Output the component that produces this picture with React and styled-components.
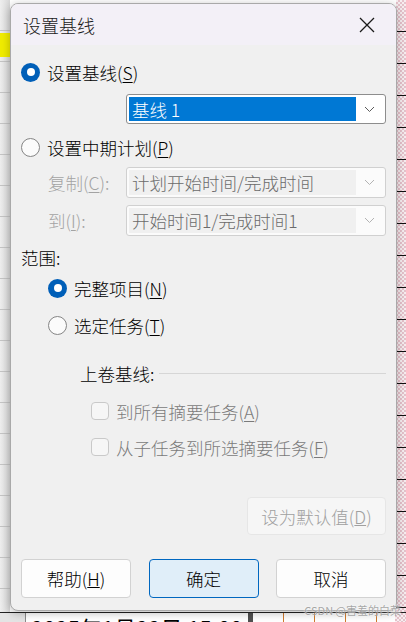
import React from 'react'
import styled, { createGlobalStyle } from 'styled-components'

const GlobalStyle = createGlobalStyle`
  html, body {
    margin: 0;
    padding: 0;
  }
  body {
    font-family: "Microsoft YaHei UI", "Noto Sans CJK SC", sans-serif;
    -webkit-font-smoothing: antialiased;
  }
`

const Desktop = styled.div`
  position: relative;
  width: 406px;
  height: 622px;
  overflow: hidden;
  display: grid;
  grid-template-columns: 10px 1fr 10px;
  grid-template-rows: 612px 10px;
  background: #fff;
`

const LeftPane = styled.div`
  display: flex;
  flex-direction: column;
  background:
    repeating-linear-gradient(to bottom, transparent 0 30px, #c4c4c4 30px 31px),
    linear-gradient(to right, #eeeeee, #d8d8d8);
`

const YellowCell = styled.div`
  margin-top: 33px;
  height: 24px;
  background: #f0ec00;
`

const RightPane = styled.div`
  background:
    repeating-linear-gradient(to bottom, transparent 0 31px, #111 31px 32px),
    repeating-conic-gradient(#e6c2cb 0 25%, #f7eef0 0 50%) 0 0 / 4px 4px;
`

const BottomStrip = styled.div`
  grid-column: 1 / -1;
  display: grid;
  grid-template-columns: 25px 1px 222px 5px 142px 1fr;
  border-top: 1px solid #222;
`

const StripGray = styled.div`
  background: #e4e4e4;
`

const StripLine = styled.div`
  background: ${p => p.$color};
`

const DateCell = styled.div`
  background: #fff;
  padding: 3px 0 0 5px;
  font-family: "Noto Sans CJK SC", sans-serif;
  font-size: 22px;
  line-height: 22px;
  color: #000;
  white-space: nowrap;
  overflow: hidden;
`

const Timeline = styled.div`
  background: repeating-linear-gradient(to right, transparent 0 30px, #d07a2c 30px 31px), #fff;
`

const Pink = styled.div`
  background: repeating-conic-gradient(#e6c2cb 0 25%, #f7eef0 0 50%) 0 0 / 4px 4px;
`

const Dialog = styled.div`
  position: absolute;
  left: 10px;
  top: 3px;
  width: 387px;
  height: 608px;
  box-sizing: border-box;
  border: 1px solid #a9a9a9;
  border-radius: 8px;
  overflow: hidden;
  display: flex;
  flex-direction: column;
  background: #f0f0f0;
  box-shadow: 0 2px 10px rgba(0, 0, 0, 0.28);
`

const TitleBar = styled.div`
  height: 41px;
  flex: none;
  display: flex;
  align-items: center;
  justify-content: space-between;
  padding: 0 14px 0 12px;
  background: #f3f0f7;
`

const Title = styled.div`
  font-size: 18px;
  font-weight: 300;
  color: #1a1a1a;
  padding-top: 1px;
`

const CloseButton = styled.div`
  width: 18px;
  height: 18px;
  display: flex;
  align-items: center;
  justify-content: center;
  margin-right: 6px;
`

const Body = styled.div`
  flex: 1;
  display: flex;
  flex-direction: column;
  padding: 0 10px 0 10px;
  font-size: 17.5px;
  font-weight: 300;
  color: #000;
`

const Row = styled.div`
  display: flex;
  align-items: center;
  height: ${p => p.$h || 22}px;
  margin-top: ${p => p.$mt || 0}px;
  margin-left: ${p => p.$ml || 0}px;
  white-space: nowrap;
`

const RadioDot = styled.span`
  flex: none;
  width: 19px;
  height: 19px;
  box-sizing: border-box;
  border-radius: 50%;
  background: ${p => (p.$checked ? '#005fb8' : '#fbfbfb')};
  border: ${p => (p.$checked ? 'none' : '1px solid #858585')};
  display: flex;
  align-items: center;
  justify-content: center;
  margin-right: 7px;

  &::after {
    content: '';
    display: ${p => (p.$checked ? 'block' : 'none')};
    width: 8px;
    height: 8px;
    border-radius: 50%;
    background: #fff;
  }
`

const Check = styled.span`
  flex: none;
  width: 18px;
  height: 18px;
  box-sizing: border-box;
  border: 1px solid #c9c9c9;
  border-radius: 4px;
  background: #f6f6f6;
  margin-right: 7px;
`

const Label = styled.span`
  color: ${p => (p.$muted ? '#a3a3a3' : p.$gray ? '#7a7a7a' : '#000')};
  u {
    text-underline-offset: 2px;
    text-decoration-thickness: 1px;
  }
`

const FieldRow = styled.div`
  display: grid;
  grid-template-columns: 105px 1fr;
  align-items: center;
  height: 31px;
  margin-top: ${p => p.$mt || 0}px;
  white-space: nowrap;
`

const FieldLabel = styled(Label)`
  padding-left: 27px;
`

const Select = styled.div`
  display: flex;
  align-items: center;
  height: ${p => p.$h || 30}px;
  box-sizing: border-box;
  border: 1px solid ${p => (p.$disabled ? '#d0d0d0' : '#8d8d8d')};
  border-radius: 3px;
  background: ${p => (p.$disabled ? '#fbfbfb' : '#fff')};
  padding: 2px;
  margin-left: ${p => p.$ml || 0}px;
  margin-top: ${p => p.$mt || 0}px;
`

const SelectValue = styled.div`
  flex: 1;
  height: 100%;
  display: flex;
  align-items: center;
  padding-left: 3px;
  background: ${p => (p.$selected ? '#0078d4' : p.$disabled ? '#f0f0f0' : 'transparent')};
  color: ${p => (p.$selected ? '#fff' : p.$disabled ? '#6b6b6b' : '#000')};
`

const ChevronBox = styled.div`
  width: 27px;
  display: flex;
  align-items: center;
  justify-content: center;
`

const SectionHead = styled.div`
  display: flex;
  align-items: center;
  height: 22px;
  margin-top: ${p => p.$mt || 0}px;
  margin-left: 59px;
`

const Rule = styled.div`
  flex: 1;
  height: 1px;
  background: #d6d6d6;
  margin-left: 5px;
`

const ButtonBase = styled.div`
  box-sizing: border-box;
  display: flex;
  align-items: center;
  justify-content: center;
  border-radius: 4px;
  white-space: nowrap;
`

const DefaultButton = styled(ButtonBase)`
  align-self: flex-end;
  width: 139px;
  height: 38px;
  margin-top: 39px;
  background: #f6f6f6;
  border: 1px solid #e6e6e6;
  color: #a0a0a0;
`

const ButtonRow = styled.div`
  display: flex;
  justify-content: space-between;
  margin-top: 24px;
`

const Button = styled(ButtonBase)`
  width: 110px;
  height: 39px;
  background: ${p => (p.$primary ? '#e0eef9' : '#fdfdfd')};
  border: 1px solid ${p => (p.$primary ? '#0067c0' : '#d2d2d2')};
  color: #000;
`

const Watermark = styled.div`
  position: absolute;
  right: 5px;
  bottom: 6px;
  font-family: "Noto Sans CJK SC", sans-serif;
  font-size: 11px;
  line-height: 12px;
  color: rgba(150, 150, 150, 0.85);
  text-shadow: 0 0 2px #fff;
`

const Chevron = ({ disabled }) => (
  <svg width="11" height="7" viewBox="0 0 11 7">
    <path d="M1 1 L5.5 5.5 L10 1" fill="none" stroke={disabled ? '#b3b3b3' : '#5c5c5c'} strokeWidth="1" />
  </svg>
)

const Radio = ({ checked, children, mt, ml }) => (
  <Row $mt={mt} $ml={ml}>
    <RadioDot $checked={checked} />
    <Label>{children}</Label>
  </Row>
)

const CheckItem = ({ children, mt }) => (
  <Row $mt={mt} $ml={70}>
    <Check />
    <Label $gray>{children}</Label>
  </Row>
)

export default function App() {
  return (
    <>
      <GlobalStyle />
      <Desktop>
        <LeftPane>
          <YellowCell />
        </LeftPane>
        <div />
        <RightPane />
        <BottomStrip>
          <StripGray />
          <StripLine $color="#8a8a8a" />
          <DateCell>2025年1月22日 15:00</DateCell>
          <StripLine $color="#505050" />
          <Timeline />
          <Pink />
        </BottomStrip>

        <Dialog>
          <TitleBar>
            <Title>设置基线</Title>
            <CloseButton>
              <svg width="16" height="16" viewBox="0 0 16 16">
                <path d="M1 1 L15 15 M15 1 L1 15" stroke="#1a1a1a" strokeWidth="1.3" fill="none" />
              </svg>
            </CloseButton>
          </TitleBar>

          <Body>
            <Radio checked mt={16}>
              设置基线(<u>S</u>)
            </Radio>
            <Select $ml={105} $mt={11}>
              <SelectValue $selected>基线 1</SelectValue>
              <ChevronBox>
                <Chevron />
              </ChevronBox>
            </Select>
            <Radio mt={12}>
              设置中期计划(<u>P</u>)
            </Radio>

            <FieldRow $mt={9}>
              <FieldLabel $muted>
                复制(<u>C</u>):
              </FieldLabel>
              <Select $disabled $h={31}>
                <SelectValue $disabled>计划开始时间/完成时间</SelectValue>
                <ChevronBox>
                  <Chevron disabled />
                </ChevronBox>
              </Select>
            </FieldRow>
            <FieldRow $mt={7}>
              <FieldLabel $muted>
                到(<u>I</u>):
              </FieldLabel>
              <Select $disabled $h={31}>
                <SelectValue $disabled>开始时间1/完成时间1</SelectValue>
                <ChevronBox>
                  <Chevron disabled />
                </ChevronBox>
              </Select>
            </FieldRow>

            <Row $mt={10}>
              <Label>范围:</Label>
            </Row>
            <Radio checked mt={9} ml={27}>
              完整项目(<u>N</u>)
            </Radio>
            <Radio mt={15} ml={27}>
              选定任务(<u>T</u>)
            </Radio>

            <SectionHead $mt={26}>
              <Label>上卷基线:</Label>
              <Rule />
            </SectionHead>
            <CheckItem mt={16}>
              到所有摘要任务(<u>A</u>)
            </CheckItem>
            <CheckItem mt={14}>
              从子任务到所选摘要任务(<u>F</u>)
            </CheckItem>

            <DefaultButton>
              设为默认值(<u>D</u>)
            </DefaultButton>

            <ButtonRow>
              <Button>
                帮助(<u>H</u>)
              </Button>
              <Button $primary>确定</Button>
              <Button>取消</Button>
            </ButtonRow>
          </Body>
        </Dialog>

        <Watermark>CSDN @害羞的白菜</Watermark>
      </Desktop>
    </>
  )
}
